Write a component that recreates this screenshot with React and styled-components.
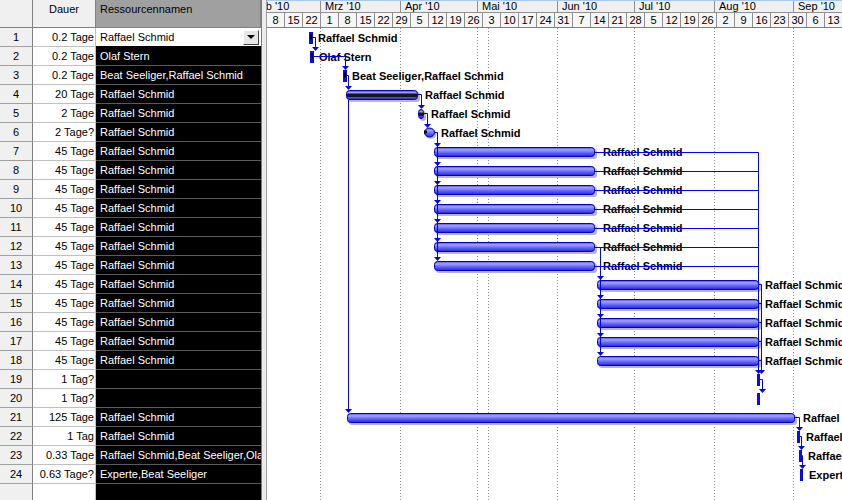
import React from 'react';
import styled, { createGlobalStyle } from 'styled-components';

const GlobalStyle = createGlobalStyle`
  html, body {
    margin: 0;
    padding: 0;
    background: #ffffff;
  }
  body {
    font-family: "Liberation Sans", Arial, sans-serif;
    font-size: 11px;
    color: #000000;
    overflow: hidden;
  }
`;

const RES = 'Raffael Schmid';

const rows = [
  { dauer: '0.2 Tage', res: RES },
  { dauer: '0.2 Tage', res: 'Olaf Stern' },
  { dauer: '0.2 Tage', res: 'Beat Seeliger,Raffael Schmid' },
  { dauer: '20 Tage', res: RES },
  { dauer: '2 Tage', res: RES },
  { dauer: '2 Tage?', res: RES },
  ...Array.from({ length: 12 }, () => ({ dauer: '45 Tage', res: RES })),
  { dauer: '1 Tag?', res: '' },
  { dauer: '1 Tag?', res: '' },
  { dauer: '125 Tage', res: RES },
  { dauer: '1 Tag', res: RES },
  { dauer: '0.33 Tage', res: 'Raffael Schmid,Beat Seeliger,Olaf Stern' },
  { dauer: '0.63 Tage?', res: 'Experte,Beat Seeliger' },
  { dauer: '', res: '', empty: true },
];

// timescale: 8. Feb 2010 sits one pixel left of the chart edge
const DAY = 86400000;
const ORIGIN = Date.UTC(2010, 1, 8);
const SCALE = 2.572;
const MONTH_NAMES = ['Jan', 'Feb', 'Mrz', 'Apr', 'Mai', 'Jun', 'Jul', 'Aug', 'Sep', 'Okt', 'Nov', 'Dez'];
const pxOf = (t) => Math.round(-1 + ((t - ORIGIN) / DAY) * SCALE);

const months = [];
for (let m = 1; m <= 9; m++) {
  const left = pxOf(Date.UTC(2010, m, 1));
  const right = pxOf(Date.UTC(2010, m + 1, 1));
  months.push({ key: m, label: `${MONTH_NAMES[m]} '10`, left, width: right - left });
}
const monthStart = months[0].left;

const weeks = [];
for (let k = 0; k < 33; k++) {
  const t = ORIGIN + k * 7 * DAY;
  const left = pxOf(t);
  weeks.push({ key: k, label: new Date(t).getUTCDate(), width: pxOf(t + 7 * DAY) - left });
}

const gridLines = [...months.slice(1).map((m) => m.left), 221];

// chart geometry (x in page pixels, converted to chart coords)
const X = (x) => x - 267;
const cy = (r) => 9.5 + (r - 1) * 19;
const barTop = (r) => (r - 1) * 19 + 5;
const thinTop = (r) => (r - 1) * 19 + 4;

const bars = [
  { row: 1, kind: 'thin', x: 309, mark: true, label: RES, lx: 318 },
  { row: 2, kind: 'thin', x: 310, mark: true, label: 'Olaf Stern', lx: 319 },
  { row: 3, kind: 'thin', x: 343, mark: true, label: 'Beat Seeliger,Raffael Schmid', lx: 352 },
  { row: 4, kind: 'bar', x1: 346, x2: 418, progress: true, label: RES, lx: 425 },
  { row: 5, kind: 'bar', x1: 418, x2: 424, progress: true, label: RES, lx: 431 },
  { row: 6, kind: 'round', x1: 424, x2: 435, label: RES, lx: 441 },
  ...[7, 8, 9, 10, 11, 12, 13].map((row) => ({ row, kind: 'bar', x1: 434, x2: 595, label: RES, lx: 603 })),
  ...[14, 15, 16, 17, 18].map((row) => ({ row, kind: 'bar', x1: 597, x2: 759, label: RES, lx: 765 })),
  { row: 19, kind: 'thin', x: 757 },
  { row: 20, kind: 'thin', x: 757 },
  { row: 21, kind: 'bar', x1: 347, x2: 795, label: RES, lx: 803 },
  { row: 22, kind: 'thin', x: 797, label: RES, lx: 806 },
  { row: 23, kind: 'thin', x: 799, label: 'Raffael Schmid,Beat Seeliger,Olaf Stern', lx: 808 },
  { row: 24, kind: 'thin', x: 800, label: 'Experte,Beat Seeliger', lx: 809 },
];

const links = [
  `M${X(313)} ${cy(1)} H${X(315.5)} V${thinTop(2) - 3}`,
  `M${X(313)} ${cy(2)} H${X(345.5)} V${thinTop(3) - 3}`,
  `M${X(346)} ${cy(3)} H${X(348.5)} V${barTop(4) - 3}`,
  `M${X(348.5)} ${barTop(4) + 10} V${barTop(21) - 3}`,
  `M${X(418)} ${cy(4)} H${X(421.5)} V${barTop(5) - 3}`,
  `M${X(424)} ${cy(5)} H${X(427.5)} V${barTop(6) - 3}`,
  `M${X(435)} ${cy(6)} H${X(437.5)} V${barTop(13) - 3}`,
  ...[7, 8, 9, 10, 11, 12, 13].map((r) => `M${X(595)} ${cy(r) + 1} H${X(758.5)}`),
  `M${X(758.5)} ${cy(7) + 1} V${thinTop(19) - 3}`,
  `M${X(600.5)} ${cy(12) + 1} V${barTop(18) - 3}`,
  ...[14, 15, 16, 17, 18].map((r) => `M${X(759)} ${cy(r)} H${X(761.5)}`),
  `M${X(761.5)} ${cy(14)} V${thinTop(19) - 3}`,
  `M${X(760)} ${cy(19)} H${X(762.5)} V${thinTop(20) - 3}`,
  `M${X(795)} ${cy(21)} H${X(799.5)} V${thinTop(22) - 3}`,
  `M${X(800)} ${cy(22)} H${X(801.5)} V${thinTop(23) - 3}`,
  `M${X(802)} ${cy(23)} H${X(802.5)} V${thinTop(24) - 3}`,
];

const arrows = [
  [315.5, thinTop(2)],
  [345.5, thinTop(3)],
  [348.5, barTop(4)],
  [421.5, barTop(5)],
  [427.5, barTop(6)],
  ...[7, 8, 9, 10, 11, 12, 13].map((r) => [437.5, barTop(r)]),
  [348.5, barTop(21)],
  ...[14, 15, 16, 17, 18].map((r) => [600.5, barTop(r)]),
  [758.5, thinTop(19)],
  [761.5, thinTop(19)],
  [762.5, thinTop(20)],
  [799.5, thinTop(22)],
  [801.5, thinTop(23)],
  [802.5, thinTop(24)],
];

const Screen = styled.div`
  display: flex;
  width: 842px;
  height: 500px;
  overflow: hidden;
  background: #ffffff;
`;

const COLUMNS = '33px 63px 165px';

const Sheet = styled.div`
  flex: none;
  width: 261px;
  display: flex;
  flex-direction: column;
  overflow: hidden;
`;

const SheetHeader = styled.div`
  flex: none;
  display: grid;
  grid-template-columns: ${COLUMNS};
  height: 28px;
`;

const HeadCell = styled.div`
  box-sizing: border-box;
  background: ${({ $active }) => ($active ? '#a0a0a0' : '#f0f0f0')};
  border-right: 1px solid #808080;
  border-bottom: 1px solid #808080;
  padding: 2px 4px 0;
  line-height: 14px;
  text-align: ${({ $align }) => $align || 'left'};
  white-space: nowrap;
  overflow: hidden;
`;

const SheetRow = styled.div`
  display: grid;
  grid-template-columns: ${COLUMNS};
  height: 19px;
  flex: none;
`;

const NumCell = styled.div`
  box-sizing: border-box;
  background: #f0f0f0;
  border-right: 1px solid #808080;
  border-bottom: 1px solid #a0a0a0;
  text-align: center;
  line-height: 18px;
`;

const DurationCell = styled.div`
  box-sizing: border-box;
  background: #ffffff;
  border-right: 1px solid #c0c0c0;
  border-bottom: 1px solid #c0c0c0;
  padding-right: 1px;
  text-align: right;
  line-height: 18px;
  white-space: nowrap;
`;

const ResourceCell = styled.div`
  box-sizing: border-box;
  display: flex;
  align-items: center;
  justify-content: space-between;
  background: ${({ $editing }) => ($editing ? '#ffffff' : '#000000')};
  color: ${({ $editing }) => ($editing ? '#000000' : '#ffffff')};
  border-bottom: 1px solid ${({ $editing }) => ($editing ? '#000000' : '#5a5a5a')};
  padding-left: 4px;
  line-height: 18px;
  white-space: nowrap;
  overflow: hidden;
`;

const DropButton = styled.span`
  flex: none;
  box-sizing: border-box;
  width: 16px;
  height: 15px;
  margin-right: 2px;
  background: #e6e6e6;
  border: 1px solid;
  border-color: #ffffff #404040 #404040 #ffffff;
  display: flex;
  align-items: center;
  justify-content: center;

  &::after {
    content: '';
    border-left: 4px solid transparent;
    border-right: 4px solid transparent;
    border-top: 4px solid #000000;
  }
`;

const Splitter = styled.div`
  flex: none;
  box-sizing: border-box;
  width: 6px;
  background: #ececec;
  border-left: 1px solid #7a7a7a;
  border-right: 1px solid #a0a0a0;
`;

const Gantt = styled.div`
  flex: 1;
  min-width: 0;
  display: flex;
  flex-direction: column;
  overflow: hidden;
`;

const Timescale = styled.div`
  flex: none;
  height: 28px;
  overflow: hidden;
`;

const MonthTier = styled.div`
  display: flex;
  box-sizing: border-box;
  height: 13px;
  background: #f0f0f0;
  border-top: 1px solid #a8c8ec;
  border-bottom: 1px solid #909090;
`;

const MonthCell = styled.div`
  flex: none;
  box-sizing: border-box;
  border-left: 1px solid #909090;
  padding-left: 4px;
  line-height: 11px;
  white-space: nowrap;
  overflow: hidden;
`;

const WeekTier = styled.div`
  display: flex;
  box-sizing: border-box;
  height: 15px;
  background: #f6f6f6;
  border-bottom: 1px solid #808080;
`;

const WeekCell = styled.div`
  flex: none;
  box-sizing: border-box;
  border-left: 1px solid #909090;
  padding-top: 1px;
  line-height: 13px;
  text-align: center;
  white-space: nowrap;
  overflow: hidden;
`;

const ChartSvg = styled.svg`
  display: block;
  flex: none;
  background: #ffffff;
`;

const BarLabel = styled.text`
  font-family: "Liberation Sans", Arial, sans-serif;
  font-size: 11px;
  font-weight: bold;
  fill: #000000;
`;

function TaskBar({ bar }) {
  const c = cy(bar.row);
  if (bar.kind === 'thin') {
    return (
      <g>
        <rect x={X(bar.x)} y={thinTop(bar.row)} width={bar.mark ? 4 : 3} height={12} fill="#0a0af0" />
        {bar.mark && <rect x={X(bar.x) + 1} y={c - 3} width={2} height={5} fill="#000000" />}
      </g>
    );
  }
  if (bar.kind === 'round') {
    const rx = (bar.x2 - bar.x1) / 2;
    const cx = X(bar.x1) + rx;
    return (
      <g>
        <ellipse cx={cx + 1.5} cy={c + 1.5} rx={rx} ry={5} fill="#b8b8b8" />
        <ellipse cx={cx} cy={c} rx={rx - 0.5} ry={4.5} fill="url(#barFill)" stroke="#0000c8" />
        <rect x={X(bar.x1)} y={c - 2} width={3} height={3} fill="#000000" />
      </g>
    );
  }
  const top = barTop(bar.row);
  const w = bar.x2 - bar.x1;
  return (
    <g>
      <rect x={X(bar.x1) + 2} y={top + 2} width={w} height={10} rx={3} fill="#b8b8b8" />
      <rect x={X(bar.x1) + 0.5} y={top + 0.5} width={w - 1} height={9} rx={3} fill="url(#barFill)" stroke="#0000c8" />
      {bar.progress && (
        <>
          <rect x={X(bar.x1) + 1} y={top + 3} width={w - 2} height={1} fill="#5c5c5c" />
          <rect x={X(bar.x1) + 1} y={top + 4} width={w - 2} height={3} fill="#161616" />
        </>
      )}
    </g>
  );
}

function GanttChart() {
  return (
    <ChartSvg width="575" height="472" viewBox="0 0 575 472">
      <defs>
        <linearGradient id="barFill" x1="0" y1="0" x2="0" y2="1">
          <stop offset="0" stopColor="#4a4aff" />
          <stop offset="0.25" stopColor="#a4a4ff" />
          <stop offset="0.5" stopColor="#7272ff" />
          <stop offset="0.8" stopColor="#4444f4" />
          <stop offset="1" stopColor="#2020d0" />
        </linearGradient>
      </defs>
      {gridLines.map((x) => (
        <line key={x} x1={x + 0.5} x2={x + 0.5} y1={0} y2={472} stroke="#8a8a8a" strokeDasharray="1 2" />
      ))}
      {bars.map((bar) => (
        <TaskBar key={bar.row} bar={bar} />
      ))}
      {bars
        .filter((bar) => bar.label)
        .map((bar) => (
          <BarLabel key={bar.row} x={X(bar.lx)} y={cy(bar.row) + 4}>
            {bar.label}
          </BarLabel>
        ))}
      {links.map((d) => (
        <path key={d} d={d} fill="none" stroke="#0000ff" strokeWidth="1" />
      ))}
      {arrows.map(([x, y], i) => (
        <polygon
          key={i}
          points={`${X(x) - 3.5},${y - 4} ${X(x) + 3.5},${y - 4} ${X(x)},${y}`}
          fill="#0000ff"
        />
      ))}
    </ChartSvg>
  );
}

export default function App() {
  return (
    <>
      <GlobalStyle />
      <Screen>
        <Sheet>
          <SheetHeader>
            <HeadCell />
            <HeadCell $align="center">Dauer</HeadCell>
            <HeadCell $active>Ressourcennamen</HeadCell>
          </SheetHeader>
          {rows.map((row, i) => (
            <SheetRow key={i}>
              <NumCell>{row.empty ? '' : i + 1}</NumCell>
              <DurationCell>{row.dauer}</DurationCell>
              <ResourceCell $editing={i === 0}>
                {row.res}
                {i === 0 && <DropButton />}
              </ResourceCell>
            </SheetRow>
          ))}
        </Sheet>
        <Splitter />
        <Gantt>
          <Timescale>
            <MonthTier style={{ marginLeft: monthStart }}>
              {months.map((m) => (
                <MonthCell key={m.key} style={{ width: m.width }}>
                  {m.label}
                </MonthCell>
              ))}
            </MonthTier>
            <WeekTier style={{ marginLeft: -1 }}>
              {weeks.map((w) => (
                <WeekCell key={w.key} style={{ width: w.width }}>
                  {w.label}
                </WeekCell>
              ))}
            </WeekTier>
          </Timescale>
          <GanttChart />
        </Gantt>
      </Screen>
    </>
  );
}
